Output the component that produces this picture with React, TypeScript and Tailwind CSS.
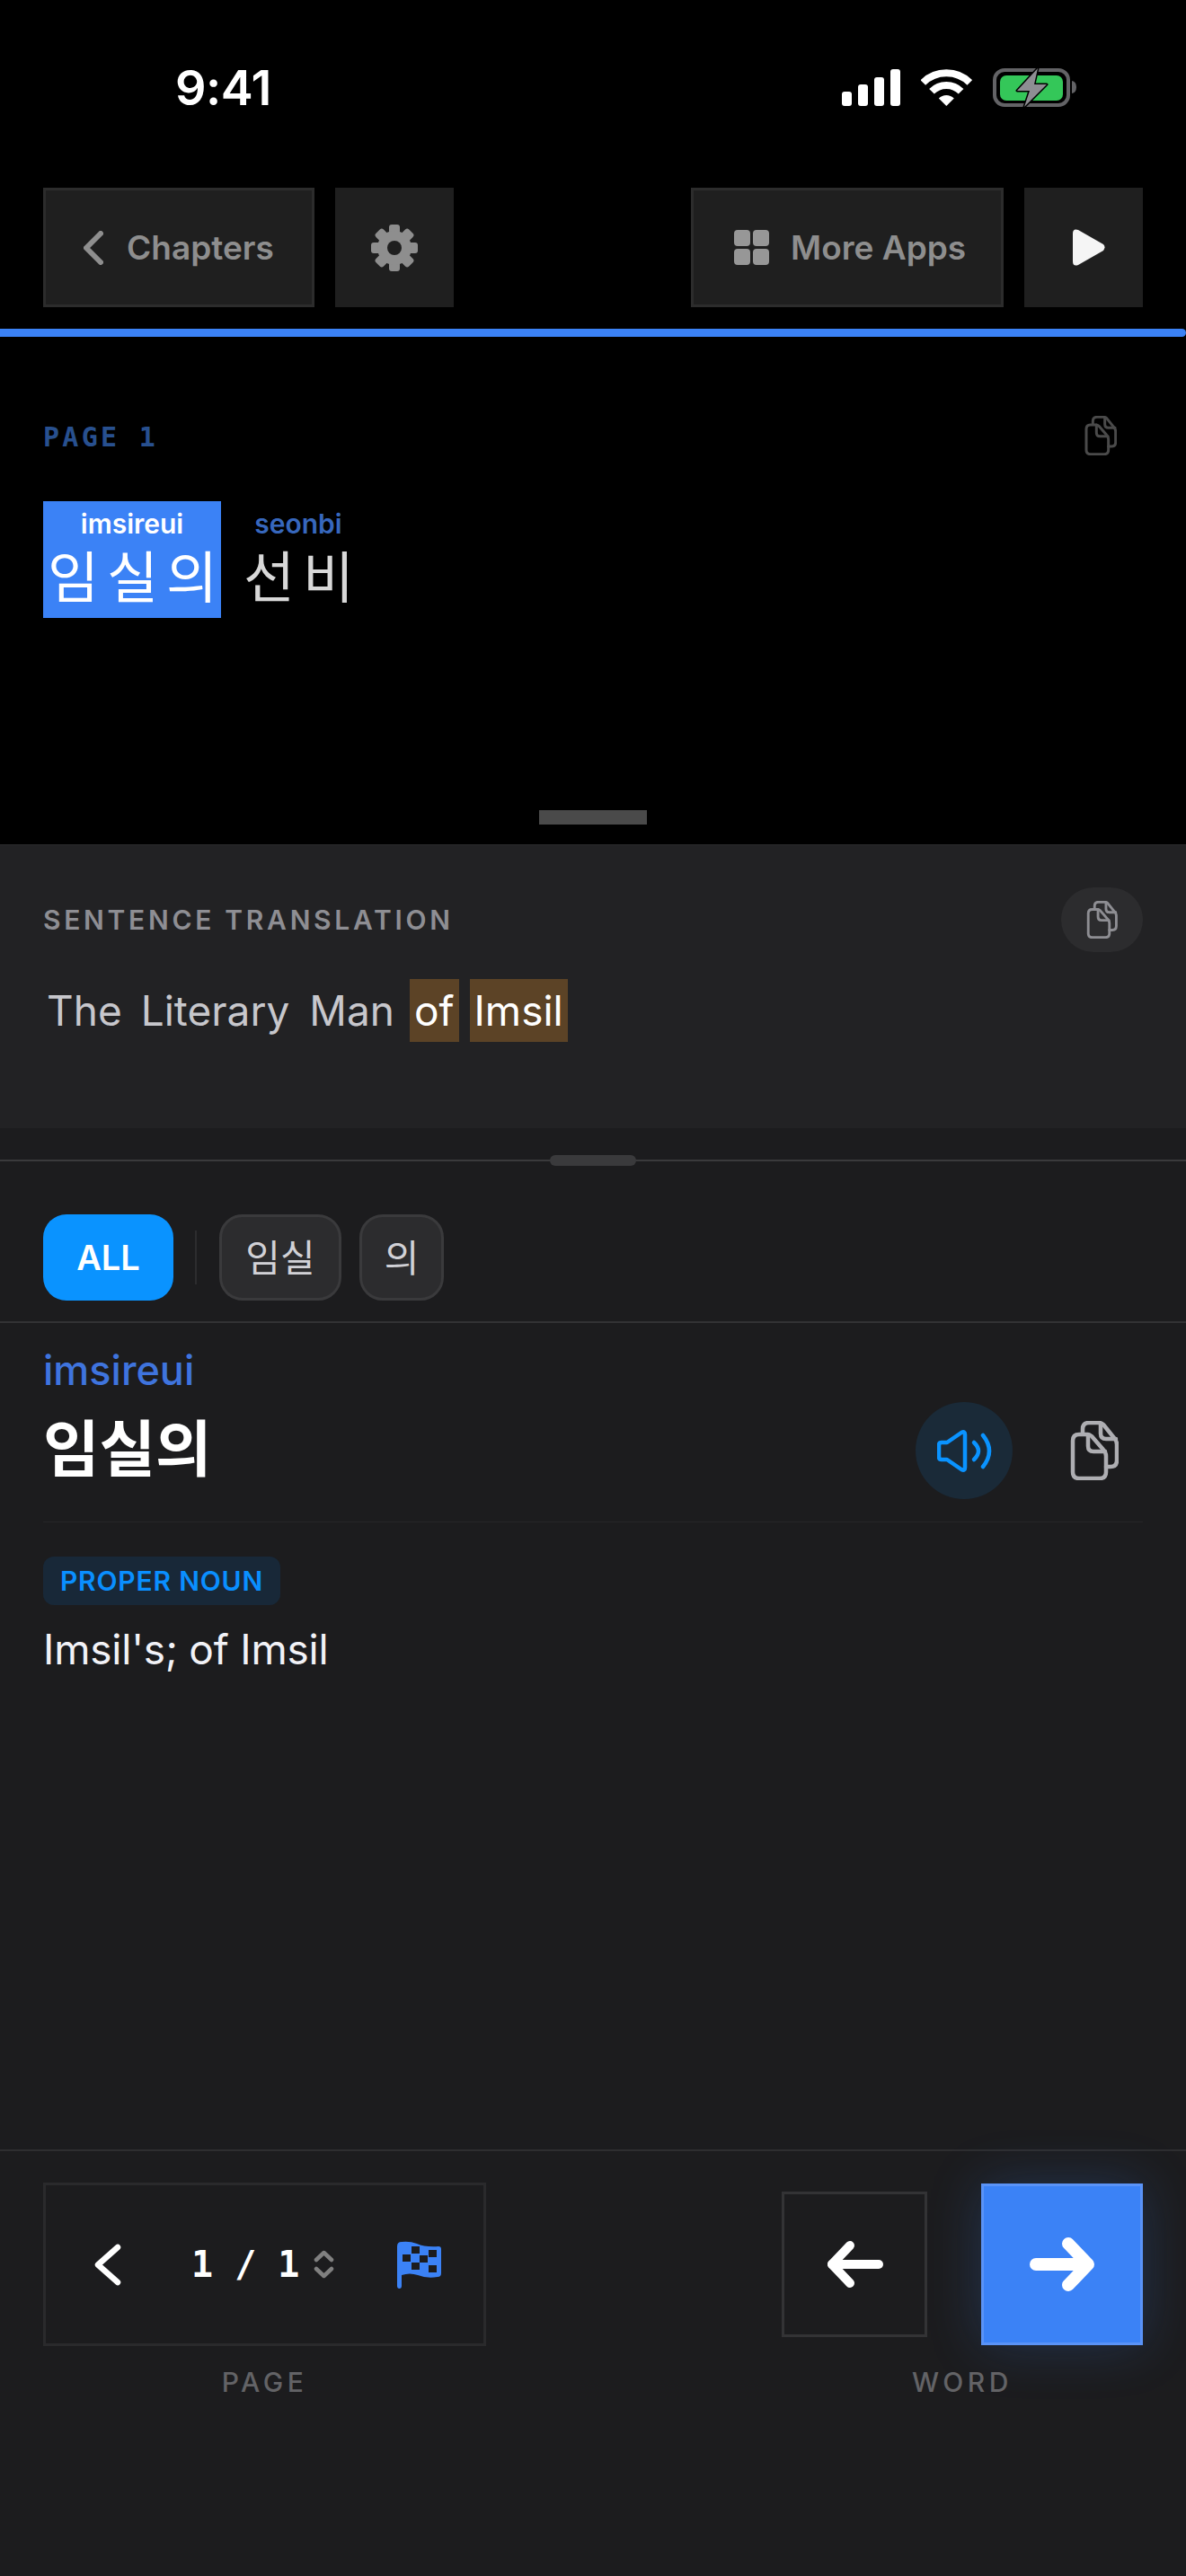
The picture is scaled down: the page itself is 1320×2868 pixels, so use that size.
const sans = "font-['Inter','Noto_Sans_CJK_KR',sans-serif]";

function CopyIcon({ className }: { className: string }) {
  return (
    <svg viewBox="0 0 54 66" fill="none" stroke="currentColor" strokeWidth="4.5" strokeLinecap="round" strokeLinejoin="round" className={className}>
      <path d="M10 15H19Q22 15 24 17L37 32Q40 35 40 39V57Q40 64 33 64H10Q3 64 3 57V22Q3 15 10 15Z" />
      <path d="M20 15V28Q20 34 26 34H39" />
      <path d="M14 14V9Q14 2 21 2H32Q35 2 37 4L49 19Q52 22 52 26V44Q52 51 45 51H40" />
      <path d="M34 3V14Q34 20 40 20H51" />
    </svg>
  );
}

function StatusIcons() {
  return (
    <div className="flex items-center">
      <svg viewBox="0 0 65 41" fill="white" className="h-[41px] w-[65px]">
        <rect x="0" y="25" width="11" height="16" rx="3" />
        <rect x="18" y="17" width="11" height="24" rx="3" />
        <rect x="36" y="9" width="11" height="32" rx="3" />
        <rect x="54" y="0" width="11" height="41" rx="3" />
      </svg>
      <svg viewBox="0 0 57 41" fill="none" stroke="white" strokeWidth="8" className="ml-[23px] h-[41px] w-[57px]">
        <path d="M2.3 15A37 37 0 0 1 54.3 15" />
        <path d="M12 24.7A23 23 0 0 1 44.6 24.7" />
        <path d="M28.3 41L19.8 32.5A12 12 0 0 1 36.8 32.5Z" fill="white" stroke="none" />
      </svg>
      <svg viewBox="0 0 93 45" className="ml-[23px] h-[45px] w-[93px]">
        <rect x="2" y="3" width="82" height="39" rx="11" fill="none" stroke="#636366" strokeWidth="4" />
        <rect x="8" y="9" width="70" height="28" rx="7" fill="#34c759" />
        <path d="M88 15Q93 16 93 22Q93 28 88 29Z" fill="#636366" />
        <path d="M50 1L27 26H41L35 44L60 19H46Z" fill="#8e8e93" stroke="#000" strokeWidth="3" strokeLinejoin="round" paintOrder="stroke" />
      </svg>
    </div>
  );
}

function Gear() {
  const teeth = [0, 45, 90, 135, 180, 225, 270, 315];
  return (
    <svg viewBox="0 0 52 52" className="h-[52px] w-[52px]">
      {teeth.map((a) => (
        <rect key={a} x="20" y="0" width="12" height="14" rx="3" fill="#8e8e8e" transform={`rotate(${a} 26 26)`} />
      ))}
      <circle cx="26" cy="26" r="19" fill="#8e8e8e" />
      <circle cx="26" cy="26" r="8" fill="#1f1f1f" />
    </svg>
  );
}

function Flag() {
  return (
    <svg viewBox="0 0 49 53" className="h-[53px] w-[49px]">
      <path d="M0 6Q0 1 5 1Q14 0 22 3Q31 7 46 6Q49 6 49 9V36Q49 40 45 40Q33 42 23 38Q14 35 5 38V50Q5 53 2.500 53Q0 53 0 50Z" fill="#3b82f6" />
      <g fill="#1c1c1e">
        <rect x="16" y="6" width="9" height="8" />
        <rect x="35" y="10" width="9" height="8" />
        <rect x="6" y="15" width="9" height="8" />
        <rect x="25" y="16" width="9" height="8" />
        <rect x="16" y="24" width="9" height="8" />
        <rect x="35" y="27" width="9" height="8" />
      </g>
    </svg>
  );
}

export default function App() {
  return (
    <div className={`flex h-[2868px] w-[1320px] flex-col overflow-hidden bg-black ${sans}`}>
      {/* status bar */}
      <div className="flex h-[209px] justify-between pl-[195px] pr-[122px] pt-[72px]">
        <span className="text-[54px] font-semibold leading-[52px] tracking-[-0.5px] text-white">9:41</span>
        <div className="pt-[3px]">
          <StatusIcons />
        </div>
      </div>

      {/* toolbar */}
      <div className="flex h-[133px] justify-between px-[48px]">
        <div className="flex gap-[23px]">
          <button type="button" className="flex w-[302px] items-center border-[3px] border-[#2c2c2c] bg-[#1f1f1f] pl-[42px] text-[#8e8e8e]">
            <svg viewBox="0 0 22 38" fill="none" stroke="currentColor" strokeWidth="6" strokeLinecap="round" strokeLinejoin="round" className="h-[38px] w-[22px]">
              <path d="M19 3L3 19L19 35" />
            </svg>
            <span className="ml-[26px] text-[37px] font-semibold">Chapters</span>
          </button>
          <button type="button" className="flex w-[132px] items-center justify-center bg-[#1f1f1f]">
            <Gear />
          </button>
        </div>
        <div className="flex gap-[23px]">
          <button type="button" className="flex w-[348px] items-center border-[3px] border-[#2c2c2c] bg-[#1f1f1f] pl-[45px] text-[#8e8e8e]">
            <svg viewBox="0 0 39 39" fill="#979797" className="h-[39px] w-[39px]">
              <rect x="0" y="0" width="18" height="18" rx="4" />
              <rect x="21" y="0" width="18" height="18" rx="4" />
              <rect x="0" y="21" width="18" height="18" rx="4" />
              <rect x="21" y="21" width="18" height="18" rx="4" />
            </svg>
            <span className="ml-[24px] text-[37px] font-semibold">More Apps</span>
          </button>
          <button type="button" className="flex w-[132px] items-center justify-center bg-[#1f1f1f] pl-[12px]">
            <svg viewBox="0 0 37 41" fill="#f5f5f5" className="h-[41px] w-[37px]">
              <path d="M0 5Q0 -1 6 1L34 17Q37 20 34 24L6 40Q0 42 0 36Z" />
            </svg>
          </button>
        </div>
      </div>

      <div className="mt-[24px] h-[9px] rounded-r-full bg-[#3b82f6]" />

      {/* reader */}
      <div className="flex h-[565px] flex-col px-[48px]">
        <div className="mt-[88px] flex h-[44px] items-center justify-between">
          <span className="pt-[3px] font-['DejaVu_Sans_Mono',monospace] text-[30px] font-bold tracking-[3.3px] text-[#28508f]">PAGE 1</span>
          <CopyIcon className="mr-[29px] h-[44px] w-[36px] text-[#4a4a4a]" />
        </div>
        <div className="mt-[51px] flex gap-[20px]">
          <div className="flex h-[130px] w-[198px] flex-col items-center bg-[#3b82f6] text-white">
            <span className="mt-[7px] text-[30px] font-semibold leading-[36px]">imsireui</span>
            <span className="mt-[5px] self-start whitespace-nowrap pl-[5px] text-[62px] leading-[76px] tracking-[9px]">임실의</span>
          </div>
          <div className="flex w-[132px] flex-col items-center text-[#d8d8d8]">
            <span className="mt-[7px] text-[30px] font-semibold leading-[36px] text-[#3767bd]">seonbi</span>
            <span className="mt-[5px] self-start whitespace-nowrap pl-[5px] text-[62px] leading-[76px] tracking-[9px]">선비</span>
          </div>
        </div>
        <div className="mx-auto mb-[22px] mt-auto h-[16px] w-[120px] bg-[#4a4a4a]" />
      </div>

      {/* sentence translation */}
      <div className="h-[316px] border-t border-[#2a2a2c] bg-[#222224] px-[48px]">
        <div className="mt-[47px] flex h-[72px] items-center justify-between">
          <span className="text-[30px] font-semibold tracking-[3.7px] text-[#8e8e93]">SENTENCE TRANSLATION</span>
          <button type="button" className="flex h-[72px] w-[91px] items-center justify-center rounded-full bg-[#2c2c2e] text-[#8e8e93]">
            <CopyIcon className="h-[42px] w-[35px]" />
          </button>
        </div>
        <div className="mt-[30px] flex h-[70px] gap-[12px] text-[46px] leading-[70px] text-[#c7c7cc]">
          <span className="px-[4px]">The</span>
          <span className="px-[5px]">Literary</span>
          <span className="px-[5px]">Man</span>
          <span className="bg-[#5c4326] px-[5px] text-white">of</span>
          <span className="bg-[#5c4326] px-[5px] text-white">Imsil</span>
        </div>
      </div>

      {/* word panel */}
      <div className="flex flex-1 flex-col bg-[#1c1c1e]">
        <div className="relative mt-[35px] h-[2px] bg-[#3a3a3c]">
          <div className="absolute left-[612px] top-[-5px] h-[12px] w-[96px] rounded-full bg-[#3a3a3c]" />
        </div>
        <div className="flex items-center border-b-2 border-[#323234] px-[48px] pb-[23px] pt-[59px]">
          <button type="button" className="h-[96px] w-[145px] rounded-[26px] bg-[#0a93ff] text-[38px] font-semibold text-white">ALL</button>
          <div className="ml-[24px] h-[60px] w-[2px] bg-[#2c2c2e]" />
          <button type="button" className="ml-[25px] h-[96px] w-[136px] rounded-[26px] border-[3px] border-[#3a3a3c] bg-[#2c2c2e] text-[42px] text-[#d1d1d6]">임실</button>
          <button type="button" className="ml-[20px] h-[96px] w-[94px] rounded-[26px] border-[3px] border-[#3a3a3c] bg-[#2c2c2e] text-[42px] text-[#d1d1d6]">의</button>
        </div>

        <div className="flex-1 px-[48px]">
          <div className="flex items-end justify-between border-b border-[#262628] pb-[25px] pt-[30px]">
            <div>
              <div className="text-[45px] font-medium leading-[46px] text-[#3f74de]">imsireui</div>
              <div className="mt-[9px] text-[68px] font-bold leading-[111px] text-white">임실의</div>
            </div>
            <div className="flex items-center gap-[64px] pr-[27px]">
              <button type="button" className="flex h-[108px] w-[108px] items-center justify-center rounded-full bg-[#1a2a38] text-[#0a93ff]">
                <svg viewBox="0 0 61 47" fill="none" stroke="currentColor" strokeWidth="4.500" strokeLinecap="round" strokeLinejoin="round" className="h-[47px] w-[61px]">
                  <path d="M5 14H11L27 3Q31 1 31 5V42Q31 46 27 44L11 33H5Q2 33 2 30V17Q2 14 5 14Z" />
                  <path d="M41 14Q51 23.500 41 33" />
                  <path d="M51 6Q65 23.500 51 41" />
                </svg>
              </button>
              <CopyIcon className="h-[66px] w-[54px] text-[#aeaeb2]" />
            </div>
          </div>
          <div className="mt-[38px] flex h-[54px] w-[264px] items-center justify-center rounded-[12px] bg-[#182838] text-[30px] font-semibold tracking-[0.8px] text-[#0a8fff]">
            PROPER NOUN
          </div>
          <div className="mt-[20px] text-[46px] leading-[58px] tracking-[-0.2px] text-[#f2f2f7]">Imsil's; of Imsil</div>
        </div>

        {/* bottom nav */}
        <div className="flex h-[475px] justify-between border-t-2 border-[#2e2e30] px-[48px] pt-[35px]">
          <div className="flex flex-col items-center">
            <div className="flex h-[182px] w-[493px] items-center border-[3px] border-[#2a2a2c] pl-[54px] pr-[47px]">
              <svg viewBox="0 0 30 47" fill="none" stroke="white" strokeWidth="6.500" strokeLinecap="round" strokeLinejoin="round" className="h-[47px] w-[30px]">
                <path d="M26 4L4 23.500L26 43" />
              </svg>
              <span className="ml-[78px] whitespace-pre font-['DejaVu_Sans_Mono',monospace] text-[40px] font-bold leading-none text-white">1 / 1</span>
              <svg viewBox="0 0 23 32" fill="none" stroke="#808080" strokeWidth="4.500" strokeLinecap="round" strokeLinejoin="round" className="ml-[16px] h-[32px] w-[23px]">
                <path d="M3 11L11.500 3L20 11" />
                <path d="M3 21L11.500 29L20 21" />
              </svg>
              <div className="ml-auto">
                <Flag />
              </div>
            </div>
            <span className="mt-[18px] text-[30px] font-medium tracking-[4.5px] text-[#636366]">PAGE</span>
          </div>
          <div className="flex flex-col items-center">
            <div className="flex h-[182px] items-center gap-[60px]">
              <button type="button" className="flex h-[162px] w-[162px] items-center justify-center border-[3px] border-[#333335]">
                <svg viewBox="0 0 63 52" fill="none" stroke="white" strokeWidth="10" strokeLinecap="round" strokeLinejoin="round" className="h-[52px] w-[63px]">
                  <path d="M6 26H58" />
                  <path d="M26 5L6 26L26 47" />
                </svg>
              </button>
              <button type="button" className="flex h-[180px] w-[180px] items-center justify-center border-[3px] border-[#5a93f7] bg-[#3b82f6] shadow-[0_0_60px_rgba(59,130,246,0.22)]">
                <svg viewBox="0 0 72 60" fill="none" stroke="white" strokeWidth="14" strokeLinecap="round" strokeLinejoin="round" className="h-[60px] w-[72px]">
                  <path d="M7 30H64" />
                  <path d="M43 7L65 30L43 53" />
                </svg>
              </button>
            </div>
            <span className="mt-[18px] text-[30px] font-medium tracking-[4.5px] text-[#636366]">WORD</span>
          </div>
        </div>
      </div>
    </div>
  );
}
